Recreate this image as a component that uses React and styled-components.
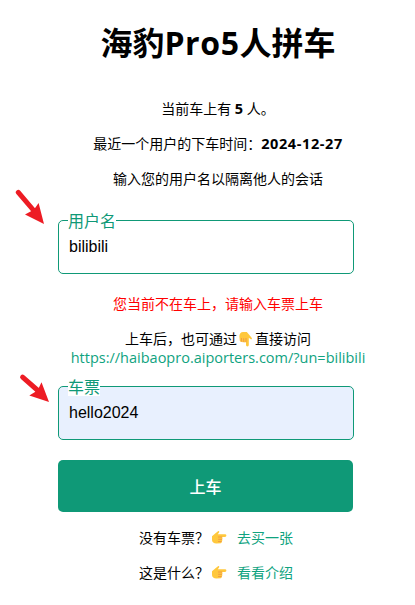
import React from "react";
import styled, { createGlobalStyle } from "styled-components";

const GlobalStyle = createGlobalStyle`
  * { box-sizing: border-box; }
  body {
    margin: 0;
    background: #fff;
    color: #000;
    font-family: "Open Sans", "Noto Sans CJK SC", sans-serif;
    font-size: 14px;
  }
`;

const Page = styled.main`
  width: 320px;
  margin-left: 58px;
  padding-top: 20px;
  display: flex;
  flex-direction: column;
`;

const Title = styled.h1`
  margin: 0 0 31px;
  height: 48px;
  line-height: 46px;
  font-size: 32px;
  font-weight: 700;
  text-align: center;
  white-space: nowrap;
`;

const Latin = styled.span`
  letter-spacing: 0.6px;
`;

const Line = styled.p`
  margin: 0 0 ${(p) => p.$gap ?? 15}px;
  height: 20px;
  line-height: 20px;
  display: flex;
  align-items: center;
  justify-content: center;
  white-space: pre;
`;

const ErrorLine = styled(Line)`
  margin-top: 20px;
  color: #f00;
`;

const FooterLine = styled(Line)`
  padding-right: 4px;
`;

const Strong = styled.b`
  font-size: 14.5px;
  letter-spacing: ${(p) => p.$spacing || 0}px;
`;

const Link = styled.a`
  color: #10a37f;
  text-decoration: none;
`;

const UrlLink = styled(Link)`
  font-size: 14.5px;
`;

const Field = styled.label`
  position: relative;
  display: block;
  width: 296px;
  height: 54px;
`;

const FieldLabel = styled.span`
  position: absolute;
  left: 10px;
  top: -7px;
  height: 17px;
  line-height: 17px;
  font-size: 16px;
  color: #0f9977;
  background: #fff;
`;

const Input = styled.input`
  display: block;
  width: 100%;
  height: 100%;
  padding: 0 10px 1px;
  border: 1px solid #0f9977;
  border-radius: 5px;
  outline: none;
  background: ${(p) => (p.$filled ? "#e8f0fe" : "#fff")};
  color: #000;
  font: 16px "Liberation Sans", Arial, sans-serif;
`;

const Button = styled.button`
  width: 295px;
  height: 52px;
  margin: 20px 0 16px;
  padding: 0 0 1px;
  border: 0;
  border-radius: 5px;
  background: #0f9977;
  color: #fff;
  font: 500 16px "Noto Sans CJK SC", sans-serif;
`;

const HandIcon = styled.svg`
  flex: none;
  width: 16px;
  height: 16px;
  margin: ${(p) => p.$margin || "0"};
  transform: rotate(${(p) => p.$turn || 0}deg);
`;

const Arrow = styled.svg`
  position: absolute;
  left: ${(p) => p.$left}px;
  top: ${(p) => p.$top}px;
  width: 30px;
  height: 36px;
`;

function Hand(props) {
  return (
    <HandIcon viewBox="0 0 16 16" {...props}>
      <path
        d="M1 6.2 4.8 3 7 1.2C8 .6 8.7 1.6 8 2.6L6.8 4.2H14a1.4 1.4 0 0 1 0 2.8h-3.2c1 .4 1 1.9 0 2.2 .8.5.7 1.9-.3 2.1.5.7.1 1.8-.8 1.9L5.5 13.6C3 13.7 1 12.2 1 10Z"
        fill="#ffc83d"
      />
      <path
        d="M7.4 7h3.4M7.6 9.3h3.2M7.4 11.5h3"
        fill="none"
        stroke="#ef9645"
        strokeWidth="0.9"
        strokeLinecap="round"
      />
    </HandIcon>
  );
}

export default function App() {
  return (
    <>
      <GlobalStyle />
      <Page>
        <Title>
          海豹<Latin>Pro5</Latin>人拼车
        </Title>
        <Line>当前车上有 <Strong>5</Strong> 人。</Line>
        <Line>最近一个用户的下车时间：<Strong $spacing={0.6}>2024-12-27</Strong></Line>
        <Line $gap={31}>输入您的用户名以隔离他人的会话</Line>
        <Field>
          <Input defaultValue="bilibili" />
          <FieldLabel>用户名</FieldLabel>
          <Arrow $left={-43} $top={-31} viewBox="0 0 30 36">
            <path d="M3.3 3.4 20 23" stroke="#ed1c24" strokeWidth="5" strokeLinecap="round" />
            <path d="M29 35 10 25.5 16 22.3 20.5 18.5 23.6 14Z" fill="#ed1c24" />
          </Arrow>
        </Field>
        <ErrorLine>您当前不在车上，请输入车票上车</ErrorLine>
        <Line $gap={-1}>上车后，也可通过<Hand $turn={90} $margin="0 2px 0 0" />直接访问</Line>
        <Line $gap={18}><UrlLink>https://haibaopro.aiporters.com/?un=bilibili</UrlLink></Line>
        <Field>
          <Input defaultValue="hello2024" $filled />
          <FieldLabel>车票</FieldLabel>
          <Arrow $left={-39} $top={-13} viewBox="0 0 30 36">
            <path d="M3.6 4.2 20 18.5" stroke="#ed1c24" strokeWidth="5" strokeLinecap="round" />
            <path d="M30 29 10.3 22.6 16 19 20 14.5 22.5 9.3Z" fill="#ed1c24" />
          </Arrow>
        </Field>
        <Button type="button">上车</Button>
        <FooterLine>没有车票？<Hand $margin="0 10px 0 2px" /><Link>去买一张</Link></FooterLine>
        <FooterLine>这是什么？<Hand $margin="0 10px 0 2px" /><Link>看看介绍</Link></FooterLine>
      </Page>
    </>
  );
}
